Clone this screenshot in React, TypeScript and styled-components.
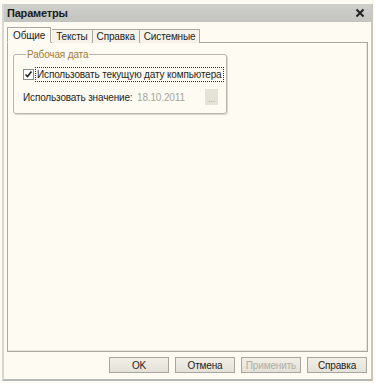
import React from 'react'
import styled, { createGlobalStyle } from 'styled-components'

const Global = createGlobalStyle`
  html, body { margin: 0; padding: 0; background: #fdfaf2; }
  body {
    font-family: "Liberation Sans", Arial, sans-serif;
    font-size: 10px;
    letter-spacing: -0.15px;
    color: #1e1e1e;
  }
`

const Window = styled.div`
  box-sizing: border-box;
  width: 375px;
  height: 383px;
  padding: 4px 2px 2px 2px;
  background: #fefbf2;
  display: flex;
  flex-direction: column;
`

const Frame = styled.div`
  flex: 1;
  display: flex;
  flex-direction: column;
  border-left: 2px solid #d8d8d2;
  border-right: 2px solid #c8c8c2;
  border-bottom: 2px solid #b8b8b2;
  background: #fefbf2;
`

const TitleBar = styled.div`
  height: 18px;
  display: flex;
  align-items: center;
  justify-content: space-between;
  padding: 0 6px 0 3px;
  background: linear-gradient(#cfcfcb, #c3c3bf);
`

const Title = styled.span`
  font-weight: bold;
  font-size: 11px;
  letter-spacing: -0.2px;
  color: #1a1a1a;
`

const Body = styled.div`
  flex: 1;
  display: flex;
  flex-direction: column;
  padding: 5px 3px 6px 3px;
`

const Tabs = styled.div`
  display: flex;
  align-items: flex-end;
  height: 16px;
  position: relative;
  z-index: 1;
`

const Tab = styled.div<{ $active?: boolean }>`
  height: ${p => (p.$active ? 16 : 14)}px;
  display: flex;
  align-items: center;
  padding: 0 ${p => (p.$active ? 5 : 4)}px;
  margin-right: ${p => (p.$active ? 1 : 0)}px;
  border: 1px solid #a9a9a2;
  border-bottom: ${p => (p.$active ? '1px solid #fefbf2' : 'none')};
  border-left: ${p => (p.$active ? '1px solid #a9a9a2' : 'none')};
  background: ${p => (p.$active ? '#fefbf2' : '#f7f3ea')};
  box-sizing: border-box;
  color: #222;
`

const Panel = styled.div`
  flex: 1;
  margin-top: -1px;
  border: 1px solid #a9a9a2;
  box-shadow: inset -1px -1px 0 #e8e5dc;
  background: #fefbf2;
  padding: 6px 5px;
`

const Group = styled.fieldset`
  width: 214px;
  min-width: 0;
  box-sizing: border-box;
  margin: 0;
  padding: 6px 8px 8px 9px;
  border: 1px solid #b9b6ac;
  border-radius: 3px;
  box-shadow: 1px 1px 1px #d9d6cc;
`

const Legend = styled.legend`
  padding: 0 1px;
  margin-left: 3px;
  color: #a57a3a;
  font-size: 10px;
`

const CheckRow = styled.label`
  display: flex;
  align-items: center;
  gap: 2px;
  height: 16px;
`

const Box = styled.span`
  width: 11px;
  height: 11px;
  box-sizing: border-box;
  border: 1px solid #8d8d86;
  background: #fff;
  display: flex;
  align-items: center;
  justify-content: center;
`

const FocusText = styled.span`
  outline: 1px dotted #333;
  padding: 1px 1px;
  white-space: nowrap;
`

const ValueRow = styled.div`
  display: flex;
  align-items: center;
  margin-top: 7px;
  height: 16px;
`

const Caption = styled.span`
  width: 114px;
  white-space: nowrap;
`

const Value = styled.span`
  flex: 1;
  color: #a8a59c;
`

const Dots = styled.span`
  width: 13px;
  height: 16px;
  background: #e5e2d8;
  color: #a8a59c;
  display: flex;
  align-items: flex-end;
  justify-content: center;
  font-size: 9px;
  line-height: 12px;
`

const Footer = styled.div`
  display: flex;
  justify-content: flex-end;
  gap: 6px;
  padding-top: 5px;
  padding-right: 1px;
`

const Button = styled.div<{ $disabled?: boolean }>`
  width: 60px;
  height: 16px;
  box-sizing: border-box;
  border: 1px solid #a8a59e;
  background: linear-gradient(#f2efe6, #e4e1d8);
  display: flex;
  align-items: center;
  justify-content: center;
  color: ${p => (p.$disabled ? '#b1aea6' : '#222')};
`

const Close = () => (
  <svg width="10" height="10" viewBox="0 0 10 10">
    <path d="M1.5 1.5 L8.5 8.5 M8.5 1.5 L1.5 8.5" stroke="#222" strokeWidth="2" />
  </svg>
)

const Check = () => (
  <svg width="9" height="9" viewBox="0 0 9 9">
    <path d="M1.5 4.5 L3.5 6.5 L7.5 1.5" stroke="#222" strokeWidth="1.6" fill="none" />
  </svg>
)

export default function App() {
  return (
    <>
      <Global />
      <Window>
        <Frame>
          <TitleBar>
            <Title>Параметры</Title>
            <Close />
          </TitleBar>
          <Body>
            <Tabs>
              <Tab $active>Общие</Tab>
              <Tab>Тексты</Tab>
              <Tab>Справка</Tab>
              <Tab>Системные</Tab>
            </Tabs>
            <Panel>
              <Group>
                <Legend>Рабочая дата</Legend>
                <CheckRow>
                  <Box><Check /></Box>
                  <FocusText>Использовать текущую дату компьютера</FocusText>
                </CheckRow>
                <ValueRow>
                  <Caption>Использовать значение:</Caption>
                  <Value>18.10.2011</Value>
                  <Dots>...</Dots>
                </ValueRow>
              </Group>
            </Panel>
            <Footer>
              <Button>OK</Button>
              <Button>Отмена</Button>
              <Button $disabled>Применить</Button>
              <Button>Справка</Button>
            </Footer>
          </Body>
        </Frame>
      </Window>
    </>
  )
}
